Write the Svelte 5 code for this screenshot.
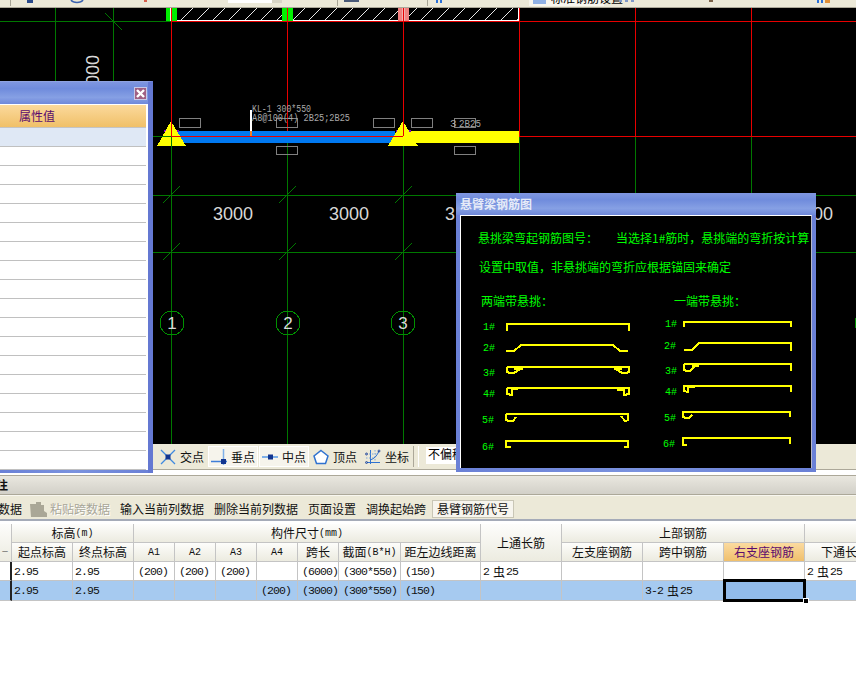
<script>
  const greenV = [55, 113];
  const gridX = [171, 287, 403, 519, 635, 751];
  const ticks = [[171,195],[287,195],[403,195],[171,252],[287,252],[403,252]];
  const axes = [[172,'1'],[288,'2'],[403,'3'],[867,'']];
  const smallBoxes = [[179,118],[276,118],[373,118],[411,118],[454,118],[276,146],[454,146]];
  const dims = [[213,'3000'],[329,'3000'],[445,'3'],[813,'00']];

  const labels = [
    [483,330,'1#'],[483,351,'2#'],[483,376,'3#'],[483,397,'4#'],[482,423,'5#'],[482,450,'6#'],
    [665,327,'1#'],[664,349,'2#'],[665,374,'3#'],[665,395,'4#'],[664,421,'5#'],[663,447,'6#']
  ];
  const bars = [
    'M507 331V324H629V331',
    'M506 351H514L521 345H613L620 351H628',
    'M514 368.500H523M507 367H629V372L626 373H622L616 369M507 367V372L510 373H514L520 369M614 368.500H622',
    'M507 388H629V394L624 395V389M507 388V394L512 395V389H518M617 389.500H624',
    'M506 414H628V420L626 421H625L621 416M506 414V420L509 421H513L516 417',
    'M511 447H506V441H628V447H624',
    'M684 327V322H791V327',
    'M684 350H692L699 343H791V351',
    'M684 364H791V371M684 364V370L687 371H690L696 365M692 365.500H699',
    'M791 392V386H684V391L688 392V387H695',
    'M790 417V412H683V417L686 418H689L692 415',
    'M790 444V438H683V445H687'
  ];
  const panelRows = Array.from({ length: 17 });
</script>

<div class="page">
  <div class="topbar">
    <svg width="856" height="7" viewBox="0 0 856 7" aria-hidden="true">
      <path d="M10.500 0V6M337.500 0V6M427.500 0V6" stroke="#a8a596" fill="none"/>
      <rect x="27" y="0" width="6" height="3" fill="#2a4a8a"/>
      <path d="M71 0A6.500 4 0 0 0 83 0" fill="none" stroke="#3a62b0" stroke-width="1.500"/>
      <rect x="144" y="0" width="3" height="2" fill="#d8604c"/>
      <rect x="228" y="0" width="54" height="3" fill="#fff"/>
      <rect x="272" y="0" width="10" height="3" fill="#d8d5c6"/>
      <rect x="344" y="0" width="15" height="2" fill="#4a5a78"/>
      <rect x="436" y="0" width="2" height="3" fill="#2a70d8"/>
      <rect x="440" y="0" width="2" height="3" fill="#2a70d8"/>
      <rect x="529" y="0" width="75" height="6" fill="#f8f6ee"/>
      <rect x="533" y="0" width="13" height="4" fill="#8fb0e4"/>
      <text x="551" y="3" class="toptext">标准钢筋设置</text>
      <path d="M619 0V2H622V0ZM625 0V2H628V0ZM631 0V2H634V0Z" fill="#7f98c8"/>
      <rect x="709" y="0" width="4" height="2" fill="#7a6248"/>
      <rect x="817" y="0" width="2" height="3" fill="#2a70d8"/>
      <rect x="821" y="0" width="2" height="3" fill="#2a70d8"/>
      <rect x="825" y="0" width="5" height="3" fill="#e09038"/>
    </svg>
  </div>

  <div class="canvas">
    <svg class="cad" width="856" height="436" viewBox="0 8 856 436" aria-label="CAD">
      <defs>
        <pattern id="hatch" width="16" height="12" patternUnits="userSpaceOnUse" x="3" y="8">
          <path d="M2 12L14 0" stroke="#e8e8e8" stroke-width="1"/>
        </pattern>
      </defs>

      <g shape-rendering="crispEdges">
        {#each greenV as x}
          <line x1={x+.5} y1="8" x2={x+.5} y2="444" stroke="#007800"/>
        {/each}
        {#each gridX as x}
          <line x1={x+.5} y1="136" x2={x+.5} y2="444" stroke="#007800"/>
        {/each}
        <line x1="0" y1="21.500" x2="171" y2="21.500" stroke="#007800"/>
        <line x1="153" y1="136.500" x2="171" y2="136.500" stroke="#007800"/>
        <line x1="153" y1="195.500" x2="856" y2="195.500" stroke="#007800"/>
        <line x1="153" y1="252.500" x2="856" y2="252.500" stroke="#007800"/>

        <rect x="171" y="8" width="348" height="12" fill="url(#hatch)"/>
        <path d="M171 20.500H518.500V8" fill="none" stroke="#fff"/>
        <rect x="166" y="8" width="11" height="13" fill="#00f000"/>
        <rect x="170" y="8" width="2" height="13" fill="#fff"/>
        <rect x="282" y="8" width="11" height="13" fill="#00f000"/>
        <rect x="398" y="8" width="11" height="13" fill="#f08080"/>
        <rect x="402" y="8" width="3" height="13" fill="#f4b0b0"/>

        {#each gridX as x}
          <line x1={x+.5} y1="8" x2={x+.5} y2="136" stroke="#e80000"/>
        {/each}
        <line x1="171" y1="21.500" x2="856" y2="21.500" stroke="#e80000"/>
      </g>

      <g stroke="#007800" fill="none">
        <line x1="105" y1="13" x2="122" y2="30"/>
        {#each ticks as [x, y]}
          <line x1={x-8} y1={y+8} x2={x+9} y2={y-9}/>
        {/each}
      </g>

      <text x="94" y="55" class="dim" transform="rotate(-90 94 55)" text-anchor="end" dominant-baseline="middle">000</text>
      {#each dims as [x, t]}
        <text x={x} y="220" class="dim">{t}</text>
      {/each}

      {#each axes as [x, n]}
        <circle cx={x} cy="323" r="12" fill="none" stroke="#009000" shape-rendering="crispEdges"/>
        <text x={x} y="329" class="axis" text-anchor="middle">{n}</text>
      {/each}

      <g shape-rendering="crispEdges">
        <rect x="171" y="131" width="224" height="12" fill="#0078f0"/>
        <rect x="403" y="131" width="116" height="12" fill="#ffff00"/>
        <line x1="171" y1="136.500" x2="403" y2="136.500" stroke="#e80000"/>
        <rect x="250" y="110" width="2" height="21" fill="#fff"/>
        <rect x="250" y="131" width="2" height="5" fill="#f08020"/>
        <line x1="519" y1="136.500" x2="856" y2="136.500" stroke="#e80000"/>
        <rect x="164" y="130" width="2" height="2" fill="#8000c0"/>
        <rect x="177" y="130" width="2" height="2" fill="#8000c0"/>
        <rect x="396" y="130" width="2" height="2" fill="#8000c0"/>
        <rect x="409" y="130" width="2" height="2" fill="#8000c0"/>
        <polygon points="171,121 157,146 186,146" fill="#ffff00"/>
        <polygon points="403,121 388,146 418,146" fill="#ffff00"/>
        <line x1="157" y1="136.500" x2="171" y2="136.500" stroke="#007800"/>
        <line x1="171.500" y1="136" x2="171.500" y2="146" stroke="#007800"/>
        <line x1="171.500" y1="121" x2="171.500" y2="136" stroke="#e80000"/>
        <line x1="403.500" y1="121" x2="403.500" y2="136" stroke="#e80000"/>
        <line x1="171" y1="136.500" x2="185" y2="136.500" stroke="#e80000"/>
        <line x1="389" y1="136.500" x2="403" y2="136.500" stroke="#e80000"/>
        {#each smallBoxes as [x, y]}
          <rect x={x+.5} y={y+.5} width="21" height={y > 130 ? 8 : 9} fill="none" stroke="#808080"/>
        {/each}
      </g>

      <text x="252" y="112" class="tag" textLength="59" lengthAdjust="spacingAndGlyphs">KL-1 300*550</text>
      <text x="252" y="121" class="tag" textLength="98" lengthAdjust="spacingAndGlyphs">A8@100(4) 2B25;2B25</text>
      <text x="450" y="127" class="tag">3</text>
      <text x="459" y="127" class="tag" textLength="22" lengthAdjust="spacingAndGlyphs">2B25</text>
    </svg>
  </div>

  <div class="snapbar">
    <div class="snap">
      <svg width="16" height="16" viewBox="0 0 16 16"><path d="M1 1L15 15M15 1L1 15" stroke="#3f8ae0" stroke-width="1.300"/><rect x="5.500" y="5.500" width="5" height="5" fill="#12358f"/></svg>
      <span>交点</span>
    </div>
    <div class="snap on">
      <svg width="16" height="16" viewBox="0 0 16 16"><path d="M12.500 0V16" stroke="#7fb0e8" stroke-width="1.500"/><path d="M0 12.500H16" stroke="#3f7ed8" stroke-width="1.500"/><rect x="10" y="10" width="5" height="5" fill="#12358f"/></svg>
      <span>垂点</span>
    </div>
    <div class="snap on">
      <svg width="16" height="16" viewBox="0 0 16 16"><path d="M0 8H16" stroke="#7fb0e8" stroke-width="2"/><rect x="6" y="5.500" width="5" height="5" fill="#12358f"/></svg>
      <span>中点</span>
    </div>
    <div class="snap">
      <svg width="16" height="16" viewBox="0 0 16 16"><path d="M8 1.500L15 7L12.500 14.500H3.500L1 7Z" fill="#fff" stroke="#2f72d0" stroke-width="1.500"/></svg>
      <span>顶点</span>
    </div>
    <div class="snap last">
      <svg width="16" height="16" viewBox="0 0 16 16" fill="none"><path d="M1.500 13.500H15M5.500 1V15" stroke="#2f72d0"/><path d="M1 5H12M1 9H10M10 1V13" stroke="#7fa8dc" stroke-dasharray="1.500 1.500"/><path d="M5 11C9 10 12 7 14 2" stroke="#2f72d0"/><circle cx="1.500" cy="5" r="1" stroke="#12358f" stroke-width=".8"/><circle cx="1.500" cy="13.500" r="1" stroke="#12358f" stroke-width=".8"/><circle cx="14" cy="2" r="1" stroke="#12358f" stroke-width=".8"/></svg>
      <span>坐标</span>
    </div>
    <div class="sep"></div>
    <div class="field">不偏移</div>
  </div>

  <div class="sechead"><span>注</span></div>

  <div class="toolbar">
    <span class="cut">数据</span>
    <span class="paste">
      <svg width="17" height="15" viewBox="0 0 17 15"><path d="M0 2H6V0H11V3H14V9L17 11V15H1Z" fill="#aaa797"/></svg>
      <span>粘贴跨数据</span>
    </span>
    <span>输入当前列数据</span>
    <span>删除当前列数据</span>
    <span>页面设置</span>
    <span>调换起始跨</span>
    <span class="active">悬臂钢筋代号</span>
  </div>

  <div class="sheet">
    <div class="grid">
      <div class="hd r2 corner"><span>一</span></div>
      <div class="hd s2">标高<small>(m)</small></div>
      <div class="hd s7">构件尺寸<small>(mm)</small></div>
      <div class="hd r2">上通长筋</div>
      <div class="hd s3">上部钢筋</div>
      <div class="hd"></div>

      <div class="hd">起点标高</div>
      <div class="hd">终点标高</div>
      <div class="hd"><small>A1</small></div>
      <div class="hd"><small>A2</small></div>
      <div class="hd"><small>A3</small></div>
      <div class="hd"><small>A4</small></div>
      <div class="hd">跨长</div>
      <div class="hd">截面<small>(B*H)</small></div>
      <div class="hd">距左边线距离</div>
      <div class="hd">左支座钢筋</div>
      <div class="hd">跨中钢筋</div>
      <div class="hd cur">右支座钢筋</div>
      <div class="hd">下通长筋</div>

      <div class="td first"></div>
      <div class="td l">2.95</div>
      <div class="td l">2.95</div>
      <div class="td">(200)</div>
      <div class="td">(200)</div>
      <div class="td">(200)</div>
      <div class="td"></div>
      <div class="td">(6000)</div>
      <div class="td">(300*550)</div>
      <div class="td">(150)</div>
      <div class="td l">2<b>虫</b>25</div>
      <div class="td"></div>
      <div class="td"></div>
      <div class="td"></div>
      <div class="td l">2<b>虫</b>25</div>

      <div class="td sel first"></div>
      <div class="td sel l">2.95</div>
      <div class="td sel l">2.95</div>
      <div class="td sel"></div>
      <div class="td sel"></div>
      <div class="td sel"></div>
      <div class="td sel">(200)</div>
      <div class="td sel">(3000)</div>
      <div class="td sel">(300*550)</div>
      <div class="td sel">(150)</div>
      <div class="td sel"></div>
      <div class="td sel"></div>
      <div class="td sel l">3-2<b>虫</b>25</div>
      <div class="td sel focus"><i></i></div>
      <div class="td sel"></div>
    </div>
  </div>

  <section class="win panel">
    <div class="wintitle">
      <button class="close" aria-label="关闭">
        <svg width="9" height="9" viewBox="0 0 9 9"><path d="M1 1L8 8M8 1L1 8" stroke="#fff" stroke-width="2.400"/></svg>
      </button>
    </div>
    <div class="panelbody">
      <div class="phead">属性值</div>
      <div class="prow tint"></div>
      {#each panelRows as _}
        <div class="prow"></div>
      {/each}
    </div>
  </section>

  <section class="win dialog">
    <div class="wintitle"><span class="dtitle">悬臂梁钢筋图</span></div>
    <div class="dbody">
      <svg width="351" height="252" viewBox="460 216 351 252">
        <text x="478" y="243" class="g">悬挑梁弯起钢筋图号：</text>
        <text x="616" y="243" class="g">当选择1#筋时，悬挑端的弯折按计算</text>
        <text x="479" y="272" class="g">设置中取值，非悬挑端的弯折应根据锚固来确定</text>
        <text x="481" y="306" class="g">两端带悬挑：</text>
        <text x="674" y="306" class="g">一端带悬挑：</text>
        {#each labels as [x, y, t]}
          <text x={x} y={y} class="n">{t}</text>
        {/each}
        {#each bars as d}
          <path d={d} fill="none" stroke="#ffff00" stroke-width="2" shape-rendering="crispEdges"/>
        {/each}
      </svg>
    </div>
  </section>
</div>

<style>
  :global(body) { margin: 0; background: #fff; }
  .page {
    position: relative;
    width: 856px;
    height: 673px;
    overflow: hidden;
    background: #fff;
    font: 12px/1 "Noto Sans CJK SC", "Liberation Sans", sans-serif;
    color: #111;
  }
  .topbar { height: 7px; background: #ece9d8; border-bottom: 1px solid #aca899; }
  .topbar svg, .cad, .dbody svg { display: block; }
  .toptext { font-size: 12px; fill: #000; }
  .canvas { height: 436px; background: #000; }
  .dim { font: 18px "Liberation Sans", sans-serif; fill: #d8d8d8; }
  .axis { font: 17px "Liberation Sans", sans-serif; fill: #d8d8d8; }
  .tag { font: 11px "Liberation Mono", monospace; fill: #a8a8a8; }

  .snapbar {
    height: 25px;
    padding-left: 157px;
    display: flex;
    align-items: center;
    background: #ece9d8;
    border-bottom: 1px solid #aca899;
    box-sizing: content-box;
  }
  .snap {
    width: 50px;
    height: 21px;
    margin-right: 1px;
    padding-left: 3px;
    box-sizing: border-box;
    display: flex;
    align-items: center;
    gap: 4px;
    white-space: nowrap;
  }
  .snap.on { background: #f6f4ec; outline: 1px solid #fff; outline-offset: -1px; }
  .snap.last { width: 48px; margin-left: 1px; }
  .sep { width: 4px; height: 21px; margin: 0 7px 0 2px; border-left: 1px solid #aca899; border-right: 1px solid #fff; }
  .field { width: 60px; height: 16px; padding: 1px 0 0 2px; background: #fff; white-space: nowrap; color: #000; margin-top: -3px; }

  .sechead {
    margin-top: 5px;
    height: 20px;
    display: flex;
    align-items: center;
    background: linear-gradient(#e9e7df, #d2d0c8);
    border-top: 1px solid #aca899;
    border-bottom: 1px solid #aca899;
    box-sizing: border-box;
    overflow: hidden;
  }
  .sechead span { margin-left: -4px; font-weight: 700; }

  .toolbar {
    height: 26px;
    box-sizing: border-box;
    display: flex;
    align-items: center;
    gap: 10px;
    padding-top: 3px;
    background: #ece9d8;
    border-top: 1px solid #f8f7f0;
    border-bottom: 2px solid #a5abb8;
    white-space: nowrap;
  }
  .cut { width: 22px; margin-right: -2px; overflow: hidden; direction: rtl; flex: none; }
  .paste { display: flex; align-items: center; gap: 3px; color: #a8a698; text-shadow: 1px 1px 0 #fff; }
  .active {
    margin-left: -4px;
    padding: 3px 5px;
    background: #f7f5ee;
    outline: 1px solid #c9c6b6;
    outline-offset: -1px;
  }

  .sheet { overflow: hidden; width: 856px; padding: 3px 0 4px; }
  .grid {
    display: grid;
    grid-template-columns: 12px 61px 61px 41px 41px 41px 41px 41px 62px 80px 81px 81px 81px 81px 81px;
    grid-template-rows: 19px 19px 19px 20px;
    width: 886px;
    white-space: nowrap;
  }
  .hd {
    display: flex;
    align-items: center;
    justify-content: center;
    background: linear-gradient(#fdfdfb, #ecebe0);
    border-right: 1px solid #c4c4c4;
    border-bottom: 1px solid #c4c4c4;
    box-sizing: border-box;
    overflow: hidden;
  }
  .hd small { font: 400 10px "Liberation Mono", monospace; }
  .s2 { grid-column: span 2; }
  .s3 { grid-column: span 3; }
  .s7 { grid-column: span 7; }
  .r2 { grid-row: span 2; }
  .corner { justify-content: flex-end; align-items: flex-end; padding: 0 3px 6px 0; color: #333; }
  .corner span { font-size: 6px; }
  .hd.cur { background: linear-gradient(#fbdba0, #f0c06c); color: #5a0a6e; }
  .td {
    box-sizing: border-box;
    padding: 0 0 0 4px;
    display: flex;
    align-items: center;
    background: #fff;
    border-right: 1px solid #c4c4c4;
    border-bottom: 1px solid #c4c4c4;
    font: 11.500px "Liberation Mono", monospace;
    letter-spacing: -0.9px;
    color: #111;
    overflow: hidden;
  }
  .td.l { padding-left: 2px; }
  .td b { font: 400 12px "Noto Sans CJK SC", sans-serif; letter-spacing: 0; margin: 0 1px 0 4px; }
  .td.first { border-right: 2px solid #222; }
  .td.sel { background: #a6caf0; }
  .td.focus { position: relative; background: #92bbea; border: 3px solid #000; overflow: visible; margin: -2px -1px -1px -1px; }
  .focus i { position: absolute; right: -5px; bottom: -4px; width: 4px; height: 4px; background: #000; outline: 1px solid #fff; }

  .win {
    position: absolute;
    box-sizing: border-box;
    background: linear-gradient(90deg, #6a80d6, #7a92de 50%, #6a80d6);
  }
  .wintitle {
    height: 22px;
    display: flex;
    align-items: center;
    justify-content: flex-end;
    background: linear-gradient(#7f96e0, #6f8bdc 30%, #86a0e4 70%, #6f88da);
  }
  .panel { left: 0; top: 81px; width: 153px; height: 392px; border-right: 5px solid #6478d2; border-top: 1px solid #8fa2e0; }
  .close {
    width: 13px;
    height: 13px;
    margin-right: 1px;
    padding: 0;
    border: 1px solid #c9c9e6;
    background: #a06084;
    display: flex;
    align-items: center;
    justify-content: center;
  }
  .panelbody {
    margin-right: 0;
    height: 365px;
    background: #fff;
    border-top: 1px solid #fff;
    border-right: 2px solid #fff;
    overflow: hidden;
  }
  .phead {
    height: 23px;
    padding: 5px 0 0 19px;
    box-sizing: border-box;
    background: linear-gradient(#fbd99c, #f0c068);
    color: #5a0a6e;
    border-bottom: 1px solid #c4c4c4;
  }
  .prow { height: 19px; box-sizing: border-box; border-bottom: 1px solid #c0c0c0; background: #fff; }
  .prow.tint { background: #dfe8f5; }

  .dialog {
    left: 456px;
    top: 193px;
    width: 360px;
    height: 279px;
    padding: 0 4px 4px 4px;
  }
  .dialog .wintitle { margin: 0 -4px; justify-content: flex-start; height: 22px; }
  .dtitle { margin-left: 4px; color: #e6ebf8; font-weight: 700; }
  .dbody { background: #000; border-top: 1px solid #fff; border-left: 1px solid #fff; border-right: 1px solid #b8b8c8; height: 253px; box-sizing: border-box; overflow: hidden; }
  .dbody svg { margin-left: -1px; }
  .g { font: 12px "Noto Sans CJK SC", sans-serif; fill: #00ff00; }
  .n { font: 10px "Liberation Mono", monospace; fill: #00ff00; }
</style>
